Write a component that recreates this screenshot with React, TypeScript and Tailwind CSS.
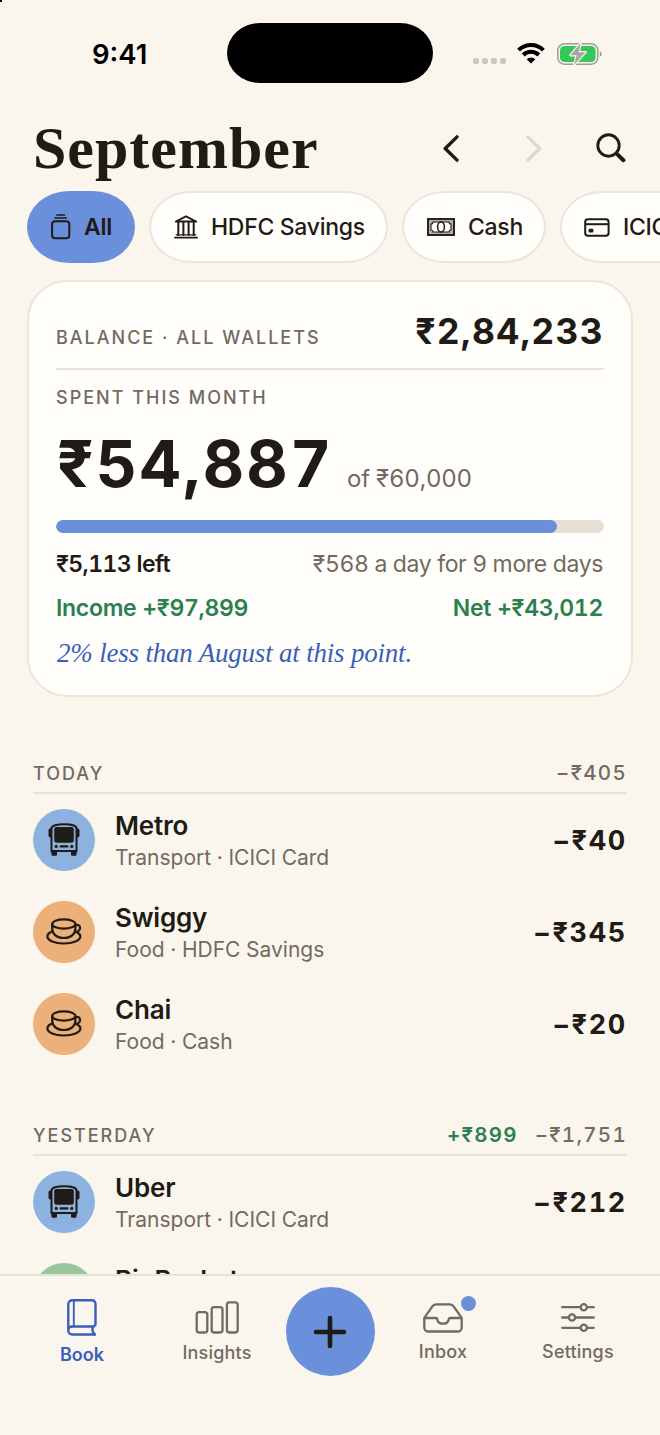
import type { ReactNode } from "react";
import clsx from "clsx";

type IconProps = { className?: string };

function WifiIcon() {
  return (
    <svg width="28" height="21" viewBox="0 0 28 21" fill="none" stroke="#000">
      <path d="M1.6 7.2a17.600 17.600 0 0 1 24.800 0" strokeWidth="4" />
      <path d="M6.200 12a11.200 11.200 0 0 1 15.600 0" strokeWidth="4" />
      <path d="M14 20.600 9.700 16.300a6 6 0 0 1 8.600 0Z" fill="#000" stroke="none" />
    </svg>
  );
}

function BatteryIcon() {
  return (
    <svg width="46" height="24" viewBox="0 0 46 24" fill="none">
      <rect x="0.8" y="1.8" width="40" height="20.4" rx="6.6" stroke="#9f9b96" strokeWidth="1.5" />
      <path d="M42.8 9.2c2.6 1 2.6 4.6 0 5.6Z" fill="#9f9b96" />
      <rect x="3" y="4" width="35.6" height="16" rx="4.6" fill="#34c759" />
      <path
        d="M23.6 1.2 13.4 13.2h6.2l-2.4 9.6 11.4-12.6h-6.8Z"
        fill="#aaa5a0"
        stroke="#faf6ee"
        strokeWidth="2.4"
        strokeLinejoin="round"
        paintOrder="stroke"
      />
    </svg>
  );
}

function StackIcon() {
  return (
    <svg width="20" height="26" viewBox="0 0 20 26" fill="none" stroke="currentColor" strokeLinecap="round">
      <path d="M5.800 1h7.800M4 4h11.400" strokeWidth="1.500" />
      <rect x="1.100" y="7.300" width="17.200" height="17" rx="3" strokeWidth="2" />
    </svg>
  );
}

function BankIcon() {
  return (
    <svg width="24" height="24" viewBox="0 0 24 24" fill="none" stroke="currentColor" strokeLinecap="round" strokeLinejoin="round">
      <path d="M1.800 6.500 12 1.300l10.200 5.200Z" strokeWidth="1.900" />
      <path d="M4.300 7.500v12.400M9.400 7.500v12.400M14.600 7.500v12.400M19.700 7.500v12.400" strokeWidth="2" />
      <path d="M2.200 19.800h19.600" strokeWidth="1.300" />
      <path d="M1 22.700h22" strokeWidth="1.800" />
    </svg>
  );
}

function CashIcon() {
  return (
    <svg width="28" height="18" viewBox="0 0 28 18" fill="none" stroke="currentColor">
      <rect x="1" y="1" width="26" height="16" fill="#b3afa9" strokeWidth="1.900" />
      <path
        d="M6 4h16a2 2 0 0 0 2 2v6a2 2 0 0 0-2 2H6a2 2 0 0 0-2-2V6a2 2 0 0 0 2-2Z"
        fill="#fffefa"
        strokeWidth="1.100"
      />
      <ellipse cx="14" cy="9" rx="3.400" ry="4.900" strokeWidth="1.500" />
    </svg>
  );
}

function CardIcon() {
  return (
    <svg width="26" height="19" viewBox="0 0 26 19" fill="none" stroke="currentColor">
      <rect x="1.2" y="1.2" width="23.4" height="16.6" rx="2.8" strokeWidth="2" />
      <path d="M1.2 6.200h23.4" strokeWidth="2" />
      <rect x="4.6" y="10.8" width="4.8" height="3.8" rx="1" fill="currentColor" stroke="none" />
    </svg>
  );
}

function BusIcon() {
  return (
    <svg width="32" height="33" viewBox="0 0 32 33" fill="none">
      <path
        d="M3.500 28V5.200C3.500 2.700 9 1.200 16 1.200s12.500 1.500 12.500 4V28Z"
        stroke="#1f1b16"
        strokeWidth="2"
        strokeLinejoin="round"
      />
      <path
        d="M3 27.500h6v4a1.300 1.300 0 0 1-1.300 1.300H4.800a1.300 1.300 0 0 1-1.300-1.300Zm20 0h6l-.5 4a1.300 1.300 0 0 1-1.300 1.300h-2.900a1.300 1.300 0 0 1-1.300-1.300ZM3.500 5.500v9H2.200A1.700 1.700 0 0 1 .5 12.800V7.200a1.700 1.700 0 0 1 1.700-1.700Zm25 0v9h1.300a1.700 1.700 0 0 0 1.700-1.700V7.200a1.700 1.700 0 0 0-1.700-1.700Z"
        fill="#1f1b16"
      />
      <rect x="6.200" y="4" width="19.600" height="15.800" rx="2.200" fill="#1f1b16" />
      <circle cx="8.200" cy="23.400" r="1.600" fill="#1f1b16" />
      <circle cx="23.800" cy="23.400" r="1.600" fill="#1f1b16" />
      <path d="M12.600 23.400h6.800" stroke="#1f1b16" strokeWidth="2.200" strokeLinecap="round" />
    </svg>
  );
}

function CupIcon() {
  return (
    <svg width="36" height="28" viewBox="0 0 36 28" fill="none" stroke="#1f1b16" strokeWidth="2.200">
      <ellipse cx="17.800" cy="6" rx="11.600" ry="4.600" />
      <path d="M6.200 6v4.600c0 5.400 4.600 9.400 11.600 9.400s11.600-4 11.600-9.400V6" />
      <path d="M29.300 7.200c2.600-.9 4.800.3 4.800 2.800 0 2.700-2.600 4.300-5.900 3.900" />
      <path d="M6.600 13.400C3.200 14.600 1.400 16.400 1.400 18.600c0 4 7.200 6.900 16.400 6.900s16.600-2.900 16.600-6.900c0-2-2-3.900-5.600-5.200" />
    </svg>
  );
}

function BookIcon({ className }: IconProps) {
  return (
    <svg className={className} width="30" height="37" viewBox="0 0 30 37" fill="none" stroke="currentColor" strokeWidth="2.400" strokeLinejoin="round" strokeLinecap="round">
      <path d="M27.800 35.500H5.200a3.900 3.900 0 0 1-3.900-3.900V5.200a3.900 3.900 0 0 1 3.900-3.900H25a3.500 3.500 0 0 1 3.500 3.500V25a2.500 2.500 0 0 1-2.500 2.500H5.200a3.900 3.900 0 0 0-3.900 3.900" />
      <path d="M26.400 27.500c-1.600 2.800-1.200 5.600 1.400 8" />
      <path d="M6.800 1.500v26" strokeWidth="1.900" />
    </svg>
  );
}

function BarsIcon({ className }: IconProps) {
  return (
    <svg className={className} width="44" height="33" viewBox="0 0 44 33" fill="none" stroke="currentColor" strokeWidth="2.300">
      <rect x="1.700" y="11.200" width="10.600" height="20.300" rx="2.400" />
      <rect x="16.700" y="6.200" width="10.800" height="25.300" rx="2.400" />
      <rect x="31.900" y="1.300" width="10.800" height="30.200" rx="2.400" />
    </svg>
  );
}

function InboxIcon({ className }: IconProps) {
  return (
    <svg className={className} width="40" height="30" viewBox="0 0 40 30" fill="none" stroke="currentColor" strokeWidth="2.300" strokeLinejoin="round">
      <path d="M1.300 14.800 9.400 3.300A4.600 4.600 0 0 1 13 1.300h14a4.600 4.600 0 0 1 3.600 2l8.100 11.500v9.700a4 4 0 0 1-4 4H5.300a4 4 0 0 1-4-4Z" />
      <path d="M1.300 15h11.200c1.200 0 1.800.6 1.900 1.700.4 2.300 2.600 4 5.600 4s5.200-1.700 5.600-4c.1-1.100.7-1.700 1.900-1.700h11.200" />
    </svg>
  );
}

function SlidersIcon({ className }: IconProps) {
  return (
    <svg className={className} width="34" height="29" viewBox="0 0 34 29" fill="none" stroke="currentColor" strokeWidth="2.300" strokeLinecap="round">
      <path d="M1.200 4.200h18.200M26.200 4.200h6.600M1.200 14.500h6.400M14.400 14.500h18.400M1.200 24.800h18.200M26.200 24.800h6.600" />
      <circle cx="22.800" cy="4.200" r="3.100" />
      <circle cx="11" cy="14.500" r="3.100" />
      <circle cx="22.800" cy="24.800" r="3.100" />
    </svg>
  );
}

function StatusBar() {
  return (
    <div className="flex h-[107px] shrink-0 items-start pt-[23px]">
      <div className="w-[227px] pt-px pl-[92px] text-[27.5px] leading-[61px] font-semibold text-black">
        9:41
      </div>
      <div className="h-[60px] w-[206px] rounded-[33px/30px] bg-black" />
      <div className="flex h-[61px] items-center pl-[40px]">
        <div className="mt-[15px] flex gap-[3px]">
          {[0, 1, 2, 3].map((i) => (
            <span key={i} className="size-[6px] rounded-[2px] bg-[#cbc7c0]" />
          ))}
        </div>
        <div className="ml-[11px]">
          <WifiIcon />
        </div>
        <div className="ml-[12px]">
          <BatteryIcon />
        </div>
      </div>
    </div>
  );
}

function MonthHeader() {
  return (
    <header className="flex h-[84px] shrink-0 items-center pr-[34px] pb-[2px] pl-[33px]">
      <h1 className="flex-1 font-['Liberation_Serif',serif] text-[60px] leading-[82px] font-bold tracking-[1px]">
        September
      </h1>
      <svg width="16" height="27" viewBox="0 0 16 27" fill="none" stroke="#1f1b16" strokeWidth="3.4" strokeLinecap="round" strokeLinejoin="round">
        <path d="M14 1.900 2.200 13.500 14 25.100" />
      </svg>
      <svg className="ml-[67px]" width="16" height="27" viewBox="0 0 16 27" fill="none" stroke="#dcd8d0" strokeWidth="3.4" strokeLinecap="round" strokeLinejoin="round">
        <path d="M1.900 1.900 13.700 13.500 1.900 25.100" />
      </svg>
      <svg className="ml-[54px]" width="30" height="30" viewBox="0 0 30 30" fill="none" stroke="#1f1b16" strokeLinecap="round">
        <circle cx="12.500" cy="12.500" r="10.700" strokeWidth="2.900" />
        <path d="m20.600 20.600 6.800 6.600" strokeWidth="4" />
      </svg>
    </header>
  );
}

function Chip({
  icon,
  label,
  active,
  className,
}: {
  icon: ReactNode;
  label: string;
  active?: boolean;
  className?: string;
}) {
  return (
    <button
      className={clsx(
        "flex h-[72px] shrink-0 items-center rounded-[42px/36px] text-[23px] tracking-[-0.3px] whitespace-nowrap",
        active
          ? "bg-[#6a8fdb] font-semibold"
          : "border-2 border-[#ebe5da] bg-[#fffefa] font-medium",
        className
      )}
    >
      {icon}
      {label}
    </button>
  );
}

function SummaryCard() {
  return (
    <section className="mx-[27px] mt-[17px] flex h-[417px] shrink-0 flex-col rounded-[40px] border-2 border-[#ebe5da] bg-[#fffefa] px-[27px] pt-[26px] tabular-nums">
      <div className="flex h-[45px] items-baseline justify-between pt-px leading-[45px]">
        <span className="text-[18px] font-[550] tracking-[2px] text-[#726a60]">
          BALANCE · ALL WALLETS
        </span>
        <span className="text-[35.5px] font-[650] tracking-[1.3px]">₹2,84,233</span>
      </div>
      <div className="mt-[15px] h-[2px] shrink-0 bg-[#e9e3d8]" />
      <div className="mt-[16px] text-[18px] leading-[24px] font-[550] tracking-[2px] text-[#726a60]">
        SPENT THIS MONTH
      </div>
      <div className="mt-[16px] flex h-[76px] items-baseline leading-[76px]">
        <span className="w-[291px] pl-px text-[64px] font-[650] tracking-[2.3px]">₹54,887</span>
        <span className="text-[24px] tracking-[-0.2px] text-[#726a60]">of ₹60,000</span>
      </div>
      <div className="mt-[18px] h-[13px] shrink-0 overflow-hidden rounded-full bg-[#e6dfd3]">
        <div
          className="h-full rounded-full bg-[#6a8fdb]"
          style={{ width: `${(54887 / 60000) * 100}%` }}
        />
      </div>
      <div className="mt-[16px] flex justify-between text-[23px] leading-[30px]">
        <span className="font-semibold tracking-[-0.6px]">₹5,113 left</span>
        <span className="pr-px tracking-[-0.35px] text-[#726a60]">₹568 a day for 9 more days</span>
      </div>
      <div className="mt-[14px] flex justify-between pr-px text-[23px] leading-[30px] font-semibold tracking-[-0.3px] text-[#2b8050]">
        <span>Income +₹97,899</span>
        <span>Net +₹43,012</span>
      </div>
      <p className="mt-[13px] pl-px font-['Liberation_Serif',serif] text-[27px] leading-[34px] tracking-[-0.2px] text-[#3a5fbb] italic">
        2% less than August at this point.
      </p>
    </section>
  );
}

type Entry = {
  name: string;
  detail: string;
  amount: string;
  kind: "transport" | "food" | "groceries";
};

const today: Entry[] = [
  { name: "Metro", detail: "Transport · ICICI Card", amount: "−₹40", kind: "transport" },
  { name: "Swiggy", detail: "Food · HDFC Savings", amount: "−₹345", kind: "food" },
  { name: "Chai", detail: "Food · Cash", amount: "−₹20", kind: "food" },
];

const yesterday: Entry[] = [
  { name: "Uber", detail: "Transport · ICICI Card", amount: "−₹212", kind: "transport" },
  { name: "BigBasket", detail: "", amount: "", kind: "groceries" },
];

const kindColor = {
  transport: "bg-[#8eb2e0]",
  food: "bg-[#ecb07a]",
  groceries: "bg-[#9ac79a]",
};

function DaySection({
  title,
  income,
  total,
  entries,
  className,
}: {
  title: string;
  income?: string;
  total: string;
  entries: Entry[];
  className?: string;
}) {
  return (
    <section className={clsx("mx-[33px] shrink-0 tabular-nums", className)}>
      <div className="flex h-[34px] items-baseline border-b-2 border-[#e8e2d6] leading-[25px] font-medium text-[#726a60]">
        <h2 className="flex-1 text-[18px] font-[550] tracking-[2px]">{title}</h2>
        {income && (
          <span className="mr-[17px] text-[20.5px] font-semibold tracking-[1.2px] text-[#2b8050]">
            {income}
          </span>
        )}
        <span className="text-[20.5px] tracking-[1.3px]">{total}</span>
      </div>
      {entries.map((e) => (
        <div key={e.name} className="flex h-[92px] items-center">
          <div
            className={clsx(
              "mb-px flex size-[62px] items-center justify-center rounded-full",
              kindColor[e.kind]
            )}
          >
            {e.kind === "transport" && <BusIcon />}
            {e.kind === "food" && <CupIcon />}
          </div>
          <div className="ml-[20px] flex-1 pt-[4px]">
            <p className="text-[26px] leading-[32px] font-semibold tracking-[-0.2px]">{e.name}</p>
            <p className="h-[32px] text-[21px] leading-[32px] text-[#726a60]">{e.detail}</p>
          </div>
          <span className="pt-[2px] text-[27px] font-[650] tracking-[1.7px]">{e.amount}</span>
        </div>
      ))}
    </section>
  );
}

function Tab({ label, icon, active }: { label: string; icon: ReactNode; active?: boolean }) {
  return (
    <button
      className={clsx(
        "flex w-[135px] flex-col items-center text-[18px]",
        active ? "font-semibold text-[#3a5fbb]" : "font-medium tracking-[0.2px] text-[#726a60]"
      )}
    >
      {icon}
      <span className="leading-[24px]">{label}</span>
    </button>
  );
}

function TabBar() {
  return (
    <nav className="flex h-[161px] shrink-0 items-start justify-center border-t-2 border-[#e8e2d6] pt-[11px]">
      <Tab active label="Book" icon={<BookIcon className="mt-[12px] mb-[7px]" />} />
      <Tab label="Insights" icon={<BarsIcon className="mt-[14px] mb-[7px]" />} />
      <button className="mx-[1px] flex size-[89px] items-center justify-center rounded-full bg-[#6a8fdb]">
        <svg width="36" height="36" viewBox="0 0 36 36" fill="none" stroke="#1f1b16" strokeWidth="4.600" strokeLinecap="round">
          <path d="M18 4v28M4 18h28" />
        </svg>
      </button>
      <Tab
        label="Inbox"
        icon={
          <div className="relative mt-[16px] mb-[7px]">
            <InboxIcon />
            <span className="absolute -top-[7px] -right-[13px] size-[15px] rounded-full bg-[#6a8fdb]" />
          </div>
        }
      />
      <Tab label="Settings" icon={<SlidersIcon className="mt-[16px] mb-[8px]" />} />
    </nav>
  );
}

export default function App() {
  return (
    <div className="relative flex h-[1435px] w-[660px] flex-col overflow-hidden bg-[#faf6ee] font-['Inter',sans-serif] text-[#1f1b16]">
      <span className="absolute top-0 left-0 size-[2px] bg-black" />
      <main className="flex min-h-0 flex-1 flex-col overflow-hidden">
        <StatusBar />
        <MonthHeader />
        <div className="flex shrink-0 gap-[14px] overflow-hidden pl-[27px]">
          <Chip active label="All" icon={<StackIcon />} className="w-[108px] gap-[13px] pl-[24px]" />
          <Chip label="HDFC Savings" icon={<BankIcon />} className="w-[239px] gap-[13px] pl-[23px]" />
          <Chip label="Cash" icon={<CashIcon />} className="w-[144px] gap-[13px] pl-[23px]" />
          <Chip label="ICICI Card" icon={<CardIcon />} className="w-[220px] gap-[13px] pl-[22px]" />
        </div>
        <SummaryCard />
        <DaySection title="TODAY" total="−₹405" entries={today} className="mt-[63px]" />
        <DaySection
          title="YESTERDAY"
          income="+₹899"
          total="−₹1,751"
          entries={yesterday}
          className="mt-[52px]"
        />
      </main>
      <TabBar />
    </div>
  );
}
